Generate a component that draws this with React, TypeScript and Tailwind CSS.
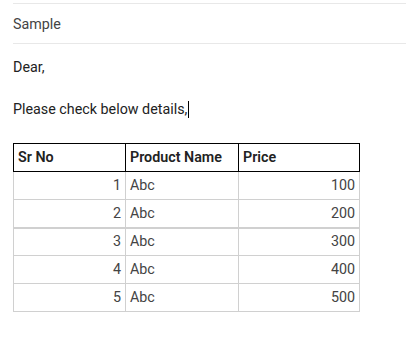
const rows = [
  { sr: 1, name: "Abc", price: 100 },
  { sr: 2, name: "Abc", price: 200 },
  { sr: 3, name: "Abc", price: 300 },
  { sr: 4, name: "Abc", price: 400 },
  { sr: 5, name: "Abc", price: 500 },
];

const App = () => {
  return (
    <div className="w-[406px] h-[343px] bg-white font-['Roboto',sans-serif] text-[14.3px] text-[#333]">
      <div className="pt-[3px]">
        <div className="ml-[13px] h-[41px] border-y border-[#e8e8e8] flex items-center pt-[2px]">
          <span className="text-[#444]">Sample</span>
        </div>
      </div>
      <div className="pl-[13px] pt-[13px] text-[#222]">
        <p className="h-[21px] leading-[21px]">Dear,</p>
        <p className="h-[20px]"></p>
        <p className="h-[21px] leading-[21px] flex items-center mt-px">
          Please check below details,
          <span className="inline-block w-px h-[17px] bg-black ml-px"></span>
        </p>
      </div>
      <div className="pl-[13px] pt-[23px]">
        <table className="border-collapse w-[346px] table-fixed">
          <colgroup>
            <col className="w-[112px]" />
            <col className="w-[113px]" />
            <col className="w-[121px]" />
          </colgroup>
          <thead>
            <tr className="h-[28px]">
              <th className="border border-black text-left font-semibold px-[4px] text-[#222]">Sr No</th>
              <th className="border border-black text-left font-semibold px-[4px] text-[#222]">Product Name</th>
              <th className="border border-black text-left font-semibold px-[4px] text-[#222]">Price</th>
            </tr>
          </thead>
          <tbody className="text-[#444]">
            {rows.map((r) => (
              <tr
                key={r.sr}
                className={r.sr === 3 ? "h-[28px] border-t-2 border-[#d0d0d0]" : "h-[28px]"}
              >
                <td className="border border-[#d0d0d0] text-right px-[4px]">{r.sr}</td>
                <td className="border border-[#d0d0d0] text-left px-[4px]">{r.name}</td>
                <td className="border border-[#d0d0d0] text-right px-[4px]">{r.price}</td>
              </tr>
            ))}
          </tbody>
        </table>
      </div>
    </div>
  );
};

export default App;
